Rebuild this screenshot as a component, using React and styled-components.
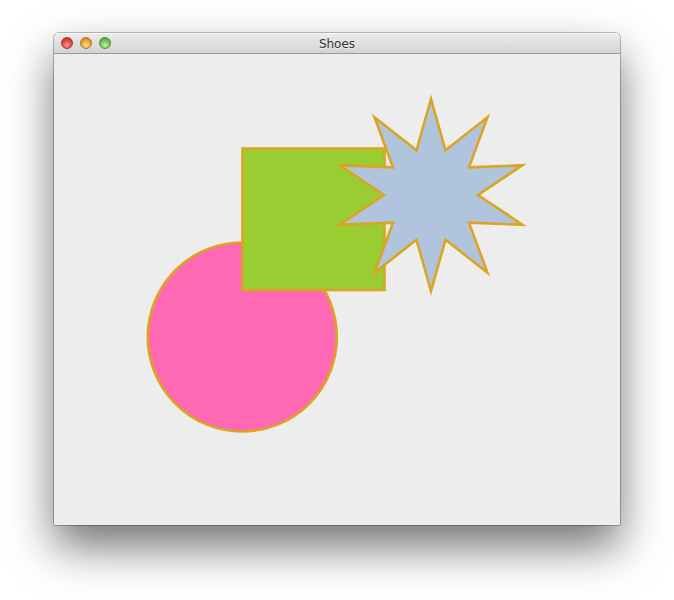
import React from "react";
import styled, { createGlobalStyle } from "styled-components";

const Global = createGlobalStyle`
  html, body { margin: 0; padding: 0; background: #ffffff; }
  body { font-family: "Lucida Grande", "DejaVu Sans", "Liberation Sans", sans-serif; }
`;

const Page = styled.div`
  width: 674px;
  height: 600px;
  padding: 33px 54px 0 54px;
  box-sizing: border-box;
  overflow: hidden;
`;

const Window = styled.div`
  width: 566px;
  height: 492px;
  display: flex;
  flex-direction: column;
  border-radius: 5px 5px 2px 2px;
  background: #ededed;
  box-shadow: 0 22px 45px rgba(0, 0, 0, 0.55), 0 0 0 1px rgba(0, 0, 0, 0.25);
  overflow: hidden;
`;

const TitleBar = styled.div`
  height: 20px;
  flex: none;
  position: relative;
  display: flex;
  align-items: center;
  justify-content: center;
  background: linear-gradient(#ececec, #d3d3d3);
  border-bottom: 1px solid #9a9a9a;
  box-shadow: inset 0 1px 0 #f8f8f8;
`;

const Lights = styled.div`
  position: absolute;
  left: 7px;
  top: 4px;
  display: flex;
  gap: 7px;
`;

const Light = styled.span`
  width: 12px;
  height: 12px;
  border-radius: 50%;
  box-sizing: border-box;
  border: 1px solid ${(p) => p.$edge};
  background: radial-gradient(circle at 50% 70%, ${(p) => p.$light} 0%, ${(p) => p.$color} 55%, ${(p) => p.$dark} 100%);
`;

const Title = styled.span`
  padding-top: 2px;
  font-size: 12px;
  color: #333333;
  font-family: "Lucida Grande", "DejaVu Sans", "Liberation Sans", sans-serif;
  text-shadow: 0 1px 0 rgba(255, 255, 255, 0.6);
`;

const Canvas = styled.div`
  flex: 1;
  background: #ededed;
`;

const starPoints = (() => {
  const cx = 377, cy = 141, ro = 96, ri = 47;
  const pts = [];
  for (let i = 0; i < 20; i++) {
    const a = (-90 + i * 18) * Math.PI / 180;
    const r = i % 2 === 0 ? ro : ri;
    pts.push(`${(cx + r * Math.cos(a)).toFixed(2)},${(cy + r * Math.sin(a)).toFixed(2)}`);
  }
  return pts.join(" ");
})();

export default function App() {
  return (
    <>
      <Global />
      <Page>
        <Window>
          <TitleBar>
            <Lights>
              <Light $color="#e0443f" $light="#ff9a90" $dark="#a8201d" $edge="#a03a36" />
              <Light $color="#e8a33a" $light="#ffe08a" $dark="#b06a10" $edge="#a8772e" />
              <Light $color="#6cc050" $light="#c4f0a0" $dark="#3a8a24" $edge="#4f9040" />
            </Lights>
            <Title>Shoes</Title>
          </TitleBar>
          <Canvas>
            <svg width="566" height="471" viewBox="0 0 566 471">
              <circle cx="188.3" cy="283" r="94.5" fill="#ff69b4" stroke="#daa520" strokeWidth="2.6" />
              <rect x="188.5" y="94.5" width="142" height="141.5" fill="#9acd32" stroke="#daa520" strokeWidth="2.6" />
              <polygon points={starPoints} fill="#b0c4de" stroke="#daa520" strokeWidth="2.6" />
            </svg>
          </Canvas>
        </Window>
      </Page>
    </>
  );
}
